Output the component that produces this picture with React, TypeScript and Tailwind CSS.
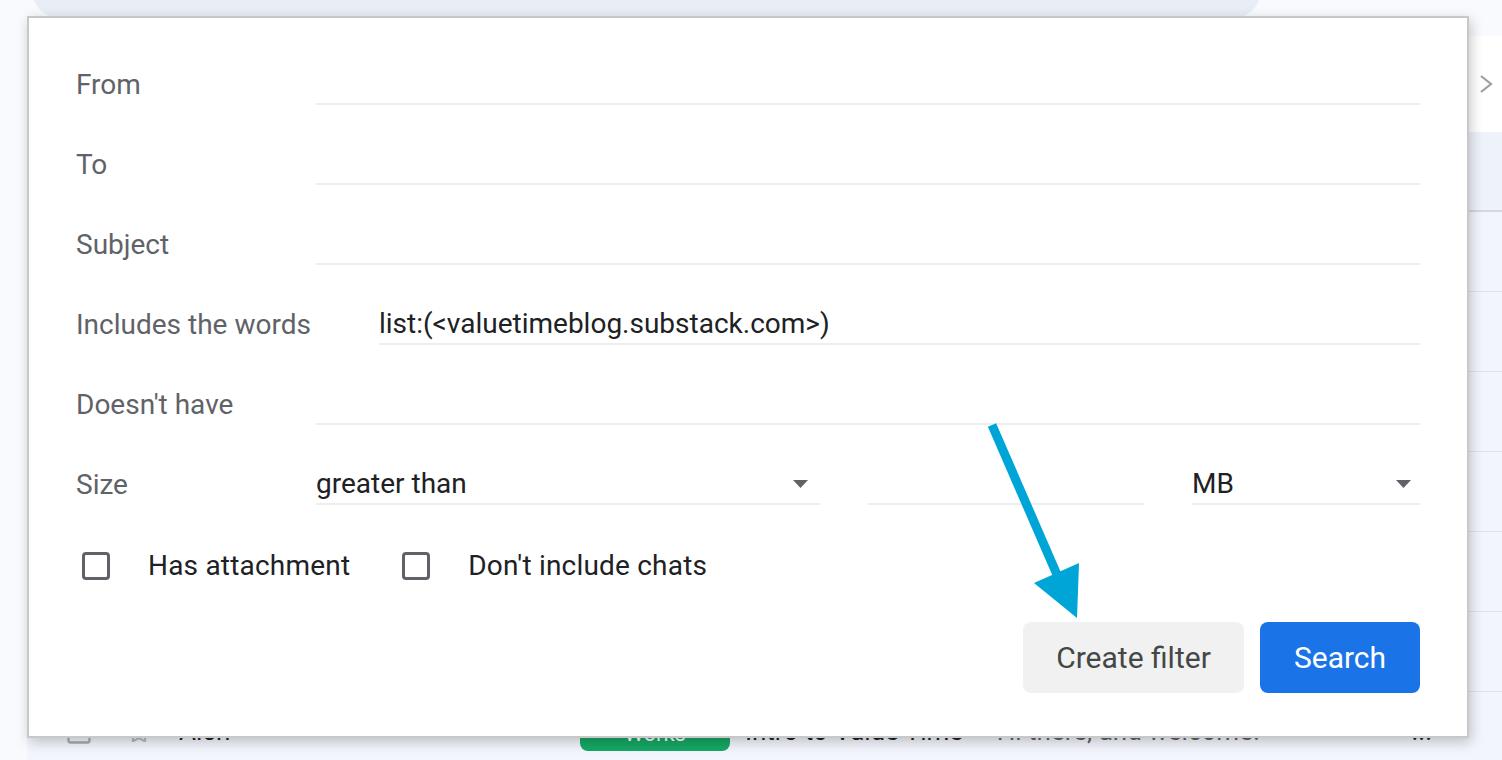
import { Square, Star } from 'lucide-react';

function Caret() {
  return (
    <svg width="15" height="8" viewBox="0 0 15 8" className="shrink-0">
      <path d="M0 0 L15 0 L7.5 8 Z" fill="#5f6368" />
    </svg>
  );
}

function Field({ label, value, labelWidth = 'w-[240px]' }: { label: string; value?: string; labelWidth?: string }) {
  return (
    <div className="flex h-[80px] items-end">
      <div className={`${labelWidth} flex h-[40px] shrink-0 items-center text-[28px] text-[#5f6368]`}>{label}</div>
      <div className="flex h-[40px] flex-1 items-center border-b-2 border-[#eeeeee] text-[28px] text-[#202124]">
        {value}
      </div>
    </div>
  );
}

function Checkbox({ label }: { label: string }) {
  return (
    <div className="flex items-center">
      <div className="h-[28px] w-[28px] rounded-[4px] border-[3px] border-[#5f6368]" />
      <span className="ml-[38px] text-[28px] tracking-[0.2px] text-[#202124]">{label}</span>
    </div>
  );
}

export default function App() {
  const rows = [0, 1, 2, 3, 4, 5, 6];

  return (
    <div className="relative h-[760px] w-[1502px] overflow-hidden bg-[#f8fafd] font-['Roboto',sans-serif]">
      {/* page behind the dialog */}
      <div className="flex h-full flex-col">
        <div className="flex h-[36px] shrink-0">
          <div className="ml-[33px] -mt-[31px] h-[48px] w-[1227px] rounded-full bg-[#e9eef6]" />
        </div>
        <div className="ml-[27px] flex flex-1 flex-col bg-[#f2f6fc]">
          <div className="flex h-[96px] shrink-0 items-center justify-end bg-white pr-[9px]">
            <svg width="14" height="20" viewBox="0 0 14 20">
              <path d="M2 2 L12 10 L2 18" fill="none" stroke="#9aa0a6" strokeWidth="2.2" />
            </svg>
          </div>
          <div className="h-[80px] shrink-0 border-b-2 border-[#d5d9df] bg-[#eef2fa]" />
          {rows.map((r) => (
            <div key={r} className="flex h-[80px] shrink-0 items-center border-b border-[#dde3ea]">
              {r === 6 && (
                <>
                  <Square size={28} strokeWidth={2} className="ml-[38px] text-[#a7abaf]" />
                  <Star size={24} strokeWidth={2} className="ml-[34px] text-[#b5b9bd]" />
                  <span className="ml-[28px] text-[26px] text-[#202124]">Alch</span>
                  <span className="ml-[350px] mt-[4px] rounded-[8px] bg-[#16a765] px-[44px] text-[22px] leading-[34px] text-white">Works</span>
                  <span className="ml-[15px] text-[26px] text-[#202124]">Intro to Value Time</span>
                  <span className="ml-[20px] text-[26px] text-[#5f6368]">- Hi there, and welcome!</span>
                  <span className="ml-auto mr-[70px] text-[26px] text-[#202124]">...</span>
                </>
              )}
            </div>
          ))}
        </div>
      </div>

      {/* search options dialog */}
      <div className="absolute left-[27px] top-[16px] h-[722px] w-[1442px] border-2 border-[#c8c8c8] bg-white px-[47px] pt-[7px] shadow-[2px_4px_12px_rgba(0,0,0,0.22)]">
        <Field label="From" />
        <Field label="To" />
        <Field label="Subject" />
        <Field label="Includes the words" value="list:(<valuetimeblog.substack.com>)" labelWidth="w-[303px]" />
        <Field label="Doesn't have" />

        <div className="flex h-[80px] items-end">
          <div className="flex h-[40px] w-[240px] shrink-0 items-center text-[28px] text-[#5f6368]">Size</div>
          <div className="flex h-[40px] w-[504px] items-center justify-between border-b-2 border-[#eeeeee] pr-[12px] text-[28px] text-[#202124]">
            <span>greater than</span>
            <Caret />
          </div>
          <div className="ml-[48px] h-[40px] w-[276px] border-b-2 border-[#eeeeee]" />
          <div className="ml-[48px] flex h-[40px] w-[228px] items-center justify-between border-b-2 border-[#eeeeee] pr-[9px] text-[28px] text-[#202124]">
            <span>MB</span>
            <Caret />
          </div>
        </div>

        <div className="mt-[41px] flex h-[40px] items-center pl-[6px]">
          <Checkbox label="Has attachment" />
          <div className="ml-[52px]">
            <Checkbox label="Don't include chats" />
          </div>
        </div>

        <div className="mt-[36px] flex justify-end gap-[16px]">
          <button className="flex h-[71px] w-[221px] items-center justify-center rounded-[8px] bg-[#f1f1f1] text-[30px] text-[#444746]">
            Create filter
          </button>
          <button className="flex h-[71px] w-[160px] items-center justify-center rounded-[8px] bg-[#1b73e8] text-[30px] text-white">
            Search
          </button>
        </div>
      </div>

      {/* annotation arrow */}
      <svg className="pointer-events-none absolute left-[980px] top-[415px]" width="110" height="210" viewBox="0 0 110 210">
        <line x1="12" y1="10" x2="78" y2="162" stroke="#00a5d7" strokeWidth="9" />
        <path d="M54 168 L99 148 L97 203 Z" fill="#00a5d7" />
      </svg>
    </div>
  );
}
